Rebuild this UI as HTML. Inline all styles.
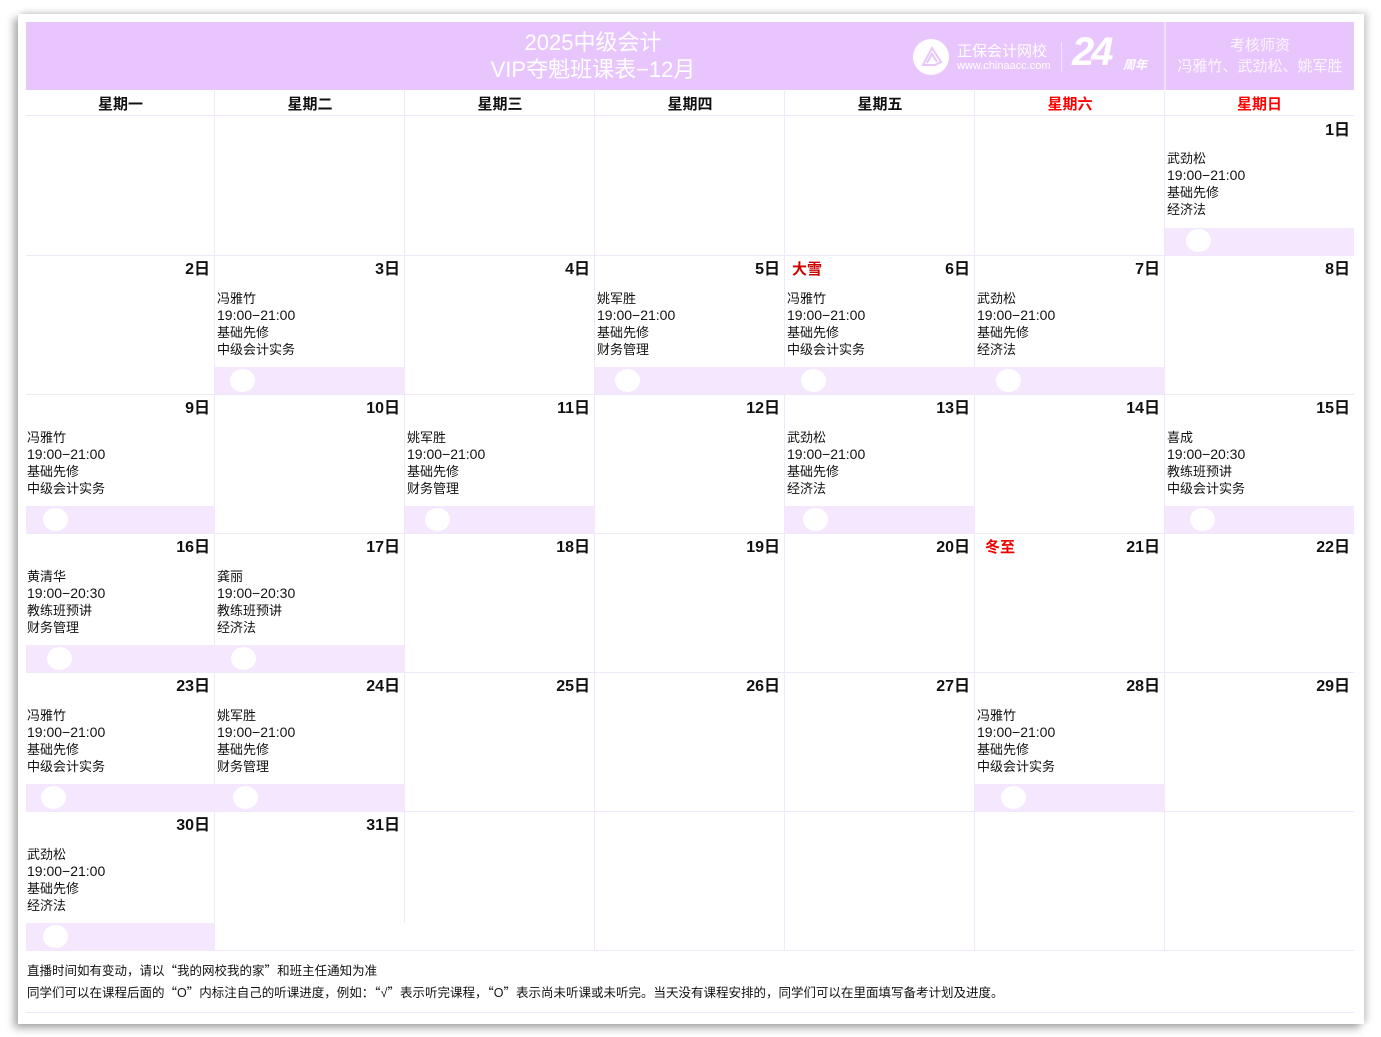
<!DOCTYPE html>
<html><head><meta charset="utf-8">
<style>
*{margin:0;padding:0;box-sizing:border-box}
body{width:1381px;height:1037px;background:#fff;position:relative;overflow:hidden;font-family:"Liberation Sans","Noto Sans CJK SC",sans-serif;color:#111}
.card{position:absolute;left:18px;top:14px;width:1346px;height:1010px;background:#fff;box-shadow:-4px 4px 8px rgba(0,0,0,.35),4px -2px 6px rgba(0,0,0,.15)}
.hdr{position:absolute;left:26px;top:22px;width:1328px;height:68px;background:#e8c6fd}
.t{position:absolute;color:#fff;text-align:center;white-space:nowrap}
.wd{position:absolute;top:91px;height:24px;font-weight:bold;font-size:15px;text-align:center;line-height:27px}
.vl{position:absolute;width:1px;background:#f1e7fb}
.hl{position:absolute;height:1px;background:#f1e7fb}
.dn{position:absolute;font-weight:bold;font-size:16px;text-align:right;width:180px;line-height:20px;margin-top:2px}
.tx{position:absolute;font-size:13px;line-height:17px;white-space:nowrap}
.tx b{font-weight:normal;font-size:14px}
.bar{position:absolute;height:27px;background:#f5e8fe}
.ci{position:absolute;width:25px;height:23px;border-radius:50%;background:#fff}
.red{position:absolute;color:#c00;font-weight:bold;font-size:15px}
.ft{position:absolute;left:27px;font-size:12.5px;white-space:nowrap}
.q{font-family:"Noto Sans CJK SC",sans-serif}
</style></head><body>
<div class="card"></div>
<div class="hdr"></div>
<div class="t" style="left:420px;top:29px;width:346px;font-size:22px;line-height:27px">2025中级会计<br>VIP夺魁班课表−12月</div>
<svg style="position:absolute;left:912px;top:38px" width="38" height="38" viewBox="0 0 38 38"><circle cx="19" cy="19" r="18" fill="#fff"/><path d="M11 27 L20 10 L29 24 L23 27 Z M15 25 L20 16 L25 24" fill="none" stroke="#e8c6fd" stroke-width="2"/></svg>
<div class="t" style="left:957px;top:40px;font-size:15px;text-align:left">正保会计网校</div>
<div class="t" style="left:957px;top:60px;font-size:11px;text-align:left">www.chinaacc.com</div>
<div style="position:absolute;left:1061px;top:42px;width:1px;height:30px;background:#f3e2fe"></div>
<div class="t" style="left:1072px;top:30px;font-size:40px;font-weight:bold;font-style:italic;text-align:left;letter-spacing:-3px">24</div>
<div class="t" style="left:1123px;top:56px;font-size:12px;font-style:italic;font-weight:bold">周年</div>
<div style="position:absolute;left:1164px;top:22px;width:2px;height:68px;background:#f3e2fe"></div>
<div class="t" style="left:1166px;top:35px;width:188px;font-size:15px;line-height:21px;color:#fcf5ff">考核师资<br>冯雅竹、武劲松、姚军胜</div>

<div class="wd" style="left:26px;width:189px">星期一</div>
<div class="wd" style="left:215px;width:190px">星期二</div>
<div class="wd" style="left:405px;width:190px">星期三</div>
<div class="wd" style="left:595px;width:190px">星期四</div>
<div class="wd" style="left:785px;width:190px">星期五</div>
<div class="wd" style="left:975px;width:190px;color:#f00">星期六</div>
<div class="wd" style="left:1165px;width:189px;color:#f00">星期日</div>

<div class="hl" style="left:26px;top:115px;width:1328px"></div>
<div class="hl" style="left:26px;top:255px;width:1328px"></div>
<div class="hl" style="left:26px;top:394px;width:1328px"></div>
<div class="hl" style="left:26px;top:533px;width:1328px"></div>
<div class="hl" style="left:26px;top:672px;width:1328px"></div>
<div class="hl" style="left:26px;top:811px;width:1328px"></div>
<div class="hl" style="left:26px;top:950px;width:1328px"></div>
<div class="hl" style="left:26px;top:1012px;width:1328px"></div>
<div class="vl" style="left:214px;top:91px;height:859px"></div>
<div class="vl" style="left:404px;top:91px;height:832px"></div>
<div class="vl" style="left:594px;top:91px;height:859px"></div>
<div class="vl" style="left:784px;top:91px;height:859px"></div>
<div class="vl" style="left:974px;top:91px;height:859px"></div>
<div class="vl" style="left:1164px;top:91px;height:859px"></div>

<div class="bar" style="left:1165px;top:228px;width:189px"></div><div class="ci" style="left:1186px;top:229px"></div>
<div class="bar" style="left:215px;top:367px;width:190px"></div><div class="ci" style="left:230px;top:369px"></div>
<div class="bar" style="left:595px;top:367px;width:570px"></div><div class="ci" style="left:615px;top:369px"></div><div class="ci" style="left:801px;top:369px"></div><div class="ci" style="left:996px;top:369px"></div>
<div class="bar" style="left:26px;top:506px;width:189px"></div><div class="ci" style="left:43px;top:508px"></div>
<div class="bar" style="left:405px;top:506px;width:190px"></div><div class="ci" style="left:425px;top:508px"></div>
<div class="bar" style="left:785px;top:506px;width:190px"></div><div class="ci" style="left:803px;top:508px"></div>
<div class="bar" style="left:1165px;top:506px;width:189px"></div><div class="ci" style="left:1190px;top:508px"></div>
<div class="bar" style="left:26px;top:645px;width:379px"></div><div class="ci" style="left:47px;top:647px"></div><div class="ci" style="left:231px;top:647px"></div>
<div class="bar" style="left:26px;top:784px;width:379px"></div><div class="ci" style="left:41px;top:786px"></div><div class="ci" style="left:233px;top:786px"></div>
<div class="bar" style="left:975px;top:784px;width:190px"></div><div class="ci" style="left:1001px;top:786px"></div>
<div class="bar" style="left:26px;top:923px;width:189px"></div><div class="ci" style="left:43px;top:925px"></div>

<div class="dn" style="left:1170px;top:119px">1日</div>
<div class="dn" style="left:30px;top:258px">2日</div>
<div class="dn" style="left:220px;top:258px">3日</div>
<div class="dn" style="left:410px;top:258px">4日</div>
<div class="dn" style="left:600px;top:258px">5日</div>
<div class="dn" style="left:790px;top:258px">6日</div>
<div class="dn" style="left:980px;top:258px">7日</div>
<div class="dn" style="left:1170px;top:258px">8日</div>
<div class="dn" style="left:30px;top:397px">9日</div>
<div class="dn" style="left:220px;top:397px">10日</div>
<div class="dn" style="left:410px;top:397px">11日</div>
<div class="dn" style="left:600px;top:397px">12日</div>
<div class="dn" style="left:790px;top:397px">13日</div>
<div class="dn" style="left:980px;top:397px">14日</div>
<div class="dn" style="left:1170px;top:397px">15日</div>
<div class="dn" style="left:30px;top:536px">16日</div>
<div class="dn" style="left:220px;top:536px">17日</div>
<div class="dn" style="left:410px;top:536px">18日</div>
<div class="dn" style="left:600px;top:536px">19日</div>
<div class="dn" style="left:790px;top:536px">20日</div>
<div class="dn" style="left:980px;top:536px">21日</div>
<div class="dn" style="left:1170px;top:536px">22日</div>
<div class="dn" style="left:30px;top:675px">23日</div>
<div class="dn" style="left:220px;top:675px">24日</div>
<div class="dn" style="left:410px;top:675px">25日</div>
<div class="dn" style="left:600px;top:675px">26日</div>
<div class="dn" style="left:790px;top:675px">27日</div>
<div class="dn" style="left:980px;top:675px">28日</div>
<div class="dn" style="left:1170px;top:675px">29日</div>
<div class="dn" style="left:30px;top:814px">30日</div>
<div class="dn" style="left:220px;top:814px">31日</div>
<div class="red" style="left:792px;top:258px">大雪</div>
<div class="red" style="left:985px;top:536px;color:#e00">冬至</div>

<div class="tx" style="left:1167px;top:150px">武劲松<br><b>19:00−21:00</b><br>基础先修<br>经济法</div>
<div class="tx" style="left:217px;top:290px">冯雅竹<br><b>19:00−21:00</b><br>基础先修<br>中级会计实务</div>
<div class="tx" style="left:597px;top:290px">姚军胜<br><b>19:00−21:00</b><br>基础先修<br>财务管理</div>
<div class="tx" style="left:787px;top:290px">冯雅竹<br><b>19:00−21:00</b><br>基础先修<br>中级会计实务</div>
<div class="tx" style="left:977px;top:290px">武劲松<br><b>19:00−21:00</b><br>基础先修<br>经济法</div>
<div class="tx" style="left:27px;top:429px">冯雅竹<br><b>19:00−21:00</b><br>基础先修<br>中级会计实务</div>
<div class="tx" style="left:407px;top:429px">姚军胜<br><b>19:00−21:00</b><br>基础先修<br>财务管理</div>
<div class="tx" style="left:787px;top:429px">武劲松<br><b>19:00−21:00</b><br>基础先修<br>经济法</div>
<div class="tx" style="left:1167px;top:429px">喜成<br><b>19:00−20:30</b><br>教练班预讲<br>中级会计实务</div>
<div class="tx" style="left:27px;top:568px">黄清华<br><b>19:00−20:30</b><br>教练班预讲<br>财务管理</div>
<div class="tx" style="left:217px;top:568px">龚丽<br><b>19:00−20:30</b><br>教练班预讲<br>经济法</div>
<div class="tx" style="left:27px;top:707px">冯雅竹<br><b>19:00−21:00</b><br>基础先修<br>中级会计实务</div>
<div class="tx" style="left:217px;top:707px">姚军胜<br><b>19:00−21:00</b><br>基础先修<br>财务管理</div>
<div class="tx" style="left:977px;top:707px">冯雅竹<br><b>19:00−21:00</b><br>基础先修<br>中级会计实务</div>
<div class="tx" style="left:27px;top:846px">武劲松<br><b>19:00−21:00</b><br>基础先修<br>经济法</div>

<div class="ft" style="top:960px">直播时间如有变动，请以<span class="q">“</span>我的网校我的家<span class="q">”</span>和班主任通知为准</div>
<div class="ft" style="top:982px">同学们可以在课程后面的<span class="q">“</span>O<span class="q">”</span>内标注自己的听课进度，例如：<span class="q">“</span>√<span class="q">”</span>表示听完课程，<span class="q">“</span>O<span class="q">”</span>表示尚未听课或未听完。当天没有课程安排的，同学们可以在里面填写备考计划及进度。</div>
</body></html>
